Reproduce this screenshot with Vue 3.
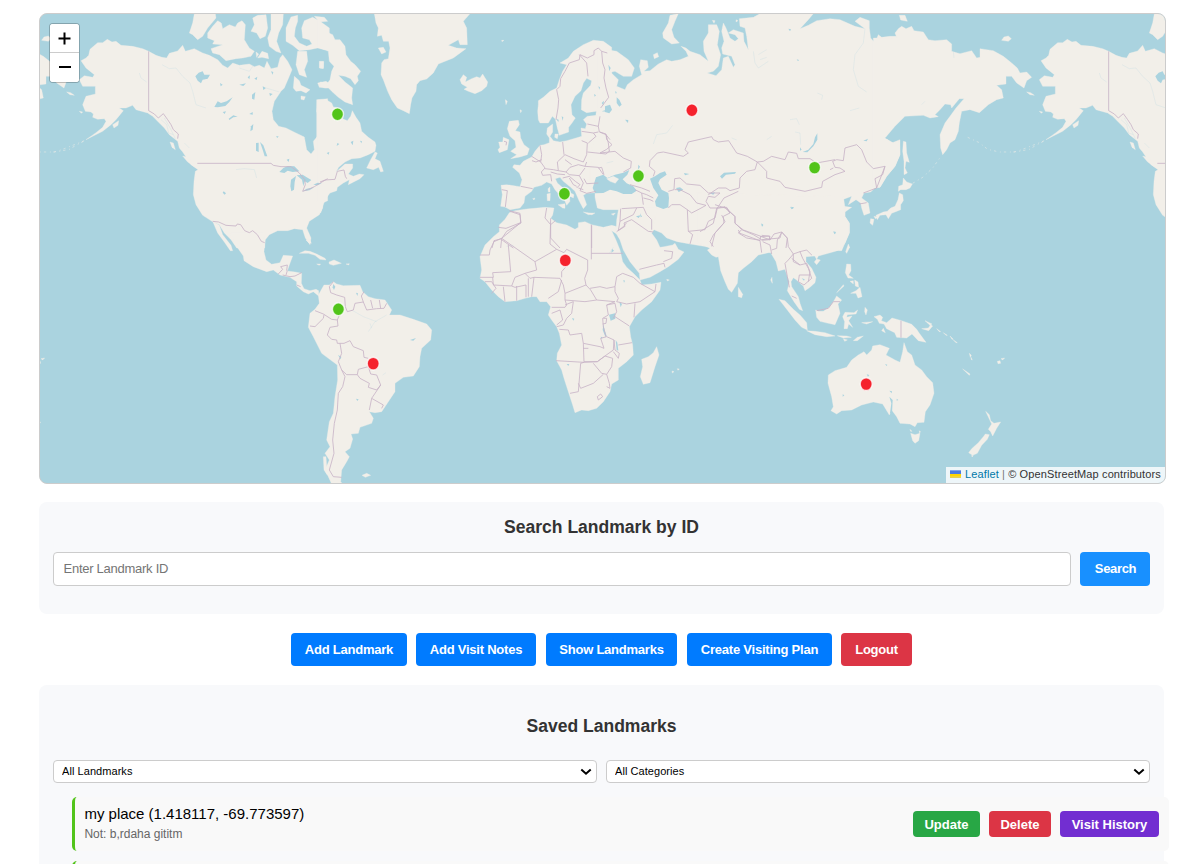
<script setup>
import { ref } from 'vue'

// Each map sheet has its own origin; coordinates are thirds of a pixel.
const sheets = [
  {
    x: 0, y: 0,
    land: [
      '135,158 150,150 158,142 162,124 185,104 200,104 214,94 228,102 240,100 255,112 290,115 320,122 338,130 360,142 378,148 392,150 400,136 425,129 440,112 448,130 475,122 500,135 520,142 545,155 560,172 575,180 590,165 610,172 640,168 655,176 670,172 685,180 693,160 705,182 725,178 732,150 740,140 755,160 768,185 760,205 745,240 735,250 715,280 708,310 712,335 728,355 750,360 780,375 805,387 812,425 825,438 835,425 832,400 850,378 852,345 842,310 845,275 875,272 875,578 860,585 860,600 850,620 820,640 812,660 825,690 822,710 808,690 800,665 775,662 755,668 725,668 700,680 688,695 686,720 602,720 585,695 565,675 550,650 528,640 500,622 480,590 472,560 474,520 478,490 486,485 465,470 452,450 440,432 430,420 425,400 400,380 385,360 370,345 350,325 335,315 300,305 290,292 270,300 250,300 262,308 240,335 225,350 200,370 170,385 150,395 180,374 200,358 210,340 205,332 185,334 170,328 172,318 165,312 148,310 140,290 150,265 178,258 178,235 140,235 130,215 145,203 170,208 175,200 150,180',
      '530,640 550,652 560,680 585,712 590,728 583,728 565,702 545,675',
      '475,17 538,17 540,30 515,60 500,85 485,95 470,80 460,75 470,45',
      '515,75 530,55 545,38 556,45 560,62 580,50 598,57 605,45 618,38 628,50 625,95 640,120 655,130 645,145 620,150 600,152 570,158 550,140 530,135 525,122 560,110 530,108 535,98 515,90',
      '650,30 665,22 690,20 695,60 688,85 672,92 662,75 645,70 655,50',
      '705,17 742,17 740,50 728,75 722,100 735,135 720,130 700,115 695,90 705,65',
      '678,130 695,136 698,152 678,148 665,150',
      '750,60 765,27 785,22 785,40 778,60 775,85 790,105 812,115 828,108 820,95 800,90 797,60 805,38 830,28 852,40 880,60 880,120 865,125 845,120 820,125 790,128 770,112 750,100',
      '835,25 865,28 875,40 850,42', '785,130 812,130 815,160 805,185 812,208 790,200 780,170',
      '775,205 790,218 795,232 822,245 810,255 795,248 780,250 772,240', '850,160 863,160 862,182 850,180', '795,264 808,266 804,276 795,274',
      '845,225 870,220 885,230 875,240 850,238', '402,402 412,405 418,425 408,418', '440,444 455,448 480,472 478,478 455,462',
      '230,350 248,338 246,352 234,360', '130,310 140,312 136,316', '660,132 668,138 662,148'
    ],
    water: [
      '478,205 488,194 500,190 505,200 522,200 515,212 500,215 495,226 485,218', '535,297 545,280 555,285 572,280 590,268 580,282 568,294 545,298',
      '730,492 742,480 755,474 775,475 790,490 770,492 755,488 745,495', '765,515 780,504 776,522 774,545 766,550 763,535',
      '782,502 800,500 812,508 826,516 815,525 806,520 802,535 798,515', '800,550 812,542 835,538 820,547', '832,530 845,524 857,526 845,532',
      '660,405 668,404 668,432 660,428', '672,402 682,412 694,445 686,445 680,425', '563,550 570,556 566,560 560,554', '578,332 592,322 605,326 592,328 580,336', '645,355 652,348 650,365 643,370',
      '648,260 658,252 655,275 648,272', '635,208 642,202 640,214', '610,230 630,226 622,234', '680,235 690,240 682,246', '752,455 760,452 758,462',
      '552,225 560,230 554,235', '705,190 712,192 710,200', '495,205 520,204 505,214', '560,312 570,310 566,318', '720,385 728,385 724,390', '640,318 650,312 650,320', '655,212 664,206 662,216', '700,255 710,258 702,264'
    ],
    borders: [
      '338,130 338,308 355,318 367,330 382,317 395,335 405,350 412,365 427,378 425,392', '484,466 705,466 712,472 735,476 765,476 790,495 806,515 808,530 800,550 815,545 835,536 848,528 858,522 875,512',
      '530,640 548,642 570,652 600,654 604,648 614,650 626,668 640,674 650,668 664,680 676,700 686,704'
    ],
    rivers: ['378,170 400,182 420,180 440,205 462,225 470,250 480,290 510,300', '310,195 315,210 332,222', '600,485 625,482 655,485 662,510', '375,335 392,350 398,375 412,380', '385,330 405,365 418,392', '445,405 460,420', '690,240 730,252', '610,180 640,190 650,175']
  },
  {
    x: 852, y: 0,
    land: [
      '-10,275 20,276 35,285 40,297 55,300 68,312 68,332 82,338 92,325 97,308 108,328 120,345 125,370 145,388 165,402 168,412 165,430 145,440 120,450 95,452 75,462 56,478 48,492 75,468 98,468 98,480 85,498 100,505 118,498 132,500 120,512 95,525 85,530 88,515 70,525 52,538 50,548 30,555 15,575 10,590 2,615 -5,600 -10,580',
      '140,480 152,455 165,432 172,435 165,452 180,460 190,490 182,492 176,478 160,485',
      '-5,35 10,52 20,72 38,80 45,95 60,95 75,115 78,140 92,160 105,170 122,190 112,205 115,218 105,230 92,212 75,205 55,202 75,222 98,240 95,270 98,290 75,282 55,268 35,250 18,232 30,215 35,190 42,175 28,160 25,130 -5,118',
      '0,165 10,162 10,180 0,180', '0,222 18,225 30,240 15,240 0,235',
      '163,17 450,17 430,40 440,60 442,110 420,110 415,95 385,112 410,120 438,122 400,150 355,168 340,195 320,213 300,218 290,230 288,250 276,270 272,290 268,317 250,308 232,300 215,275 203,250 190,215 183,200 185,165 192,155 205,152 210,120 206,100 190,100 185,82 172,85 175,60 168,45',
      '175,120 190,118 198,132 185,138', '420,215 430,200 440,208 436,222 455,212 470,206 480,210 488,198 494,208 503,222 500,235 485,248 465,257 445,250 432,244 442,238 425,228',
      '543,532 560,530 600,536 606,515 598,495 578,478 582,470 600,472 610,460 635,447 645,430 660,412 672,410 688,404 688,390 680,378 682,360 698,348 698,372 690,385 700,398 720,402 740,398 768,390 785,385 783,360 796,362 800,348 790,335 802,325 830,322 845,310 900,300 900,480 870,495 850,510 840,535 845,550 825,554 800,556 790,562 800,590 790,602 778,580 765,550 752,538 730,520 720,508 706,512 712,525 735,545 762,560 760,570 748,564 750,580 740,592 735,580 720,562 705,545 695,528 680,522 665,532 642,538 635,550 615,565 612,585 600,600 570,605 555,597 542,595 547,560',
      '714,590 735,587 735,601 728,600', '681,558 691,556 690,578 682,578', '684,542 690,537 690,552 685,552', '800,615 825,615 815,620', '638,572 645,570 642,576',
      '568,340 595,337 598,350 586,368 600,372 602,390 612,410 628,422 622,440 600,447 572,452 590,440 572,430 588,418 585,398 570,385 562,362', '550,388 567,395 562,425 538,434 534,425 540,418 536,402 548,402',
      '655,335 653,310 655,290 655,278 670,268 690,250 710,240 718,215 728,190 740,170 720,165 745,150 760,130 790,110 820,97 850,100 875,118 875,300 840,308 800,314 784,305 785,275 790,255 812,232 815,218 800,211 790,225 783,248 765,265 753,290 756,320 766,330 756,345 746,358 746,372 718,382 712,360 706,333 697,325 685,345 660,345',
      '705,378 715,378 712,392 704,388', '545,97 552,97 546,101', '556,275 562,280 558,290', '600,305 605,308 602,314'
    ],
    water: ['708,332 716,335 715,342', '725,325 730,328 728,338', '845,310 870,302 868,312', '52,405 58,408 50,414', '92,402 100,398 98,412', '120,398 126,400 124,406', '20,435 28,432 26,440', '835,235 840,238 838,245', '822,258 828,262 824,266'],
    borders: [
      '0,522 15,516 45,514 52,490 72,486 76,505 80,512', '708,335 714,300 716,275 710,245 720,235 722,212 735,190 748,165 778,155 780,140 802,150 822,140 822,128 835,120 845,130 848,165 855,185 852,210 858,240 866,268 842,300', '778,140 800,165 804,205', '845,130 862,135',
      '660,412 665,440 662,462 635,445', '662,462 675,480 664,492 668,502 692,500 695,520', '675,482 700,485 715,488 712,462 735,440 762,452 790,462 800,440 802,405 785,398', '728,402 732,440', '715,488 738,492 750,478 775,470 795,475 800,462', '735,455 755,470', '738,492 748,500 778,503 795,480', '728,510 748,505 766,520 780,530 770,540', '748,510 760,530 770,535', '795,475 835,478 850,500', '792,512 800,527 835,525', '778,503 790,525 780,548 800,556 828,550', '775,540 790,545', '692,492 712,498 735,500', '602,535 638,542', '545,545 562,548 556,597',
      '785,370 820,375 835,372', '802,348 835,355', '840,325 835,355 838,372 858,380 870,395', '820,375 828,385 805,405', '802,432 858,438 870,428', '858,380 865,405 868,430', '552,400 560,402 558,412', '636,458 648,462 665,455', '835,480 845,478 852,500',
      '570,610 600,620 603,645 560,670 545,692 542,720', '545,692 522,698 516,720', '680,600 675,630 692,650 706,638', '692,650 692,690 720,720', '815,652 815,720', '545,695 580,720'
    ],
    rivers: ['560,715 580,712']
  },
  {
    x: 1692, y: 0,
    land: [
      '-10,110 5,105 20,125 50,130 85,155 103,180 95,205 70,205 45,190 32,193 55,215 50,235 75,245 82,230 100,215 125,200 118,175 122,155 142,158 145,178 132,190 150,188 175,168 200,155 215,160 240,155 265,145 258,130 243,115 258,120 270,130 300,140 325,160 312,130 310,100 325,75 325,50 350,50 358,70 352,110 362,140 355,175 340,190 322,195 348,203 365,185 370,150 385,145 400,178 405,170 395,145 368,138 365,120 372,100 365,70 370,45 378,60 390,90 405,100 415,92 405,80 385,75 400,65 430,75 432,100 445,125 440,85 435,60 420,55 418,32 460,28 480,17 640,17 625,35 600,62 625,52 650,38 690,32 720,35 765,55 795,62 765,40 780,28 808,38 808,60 812,90 825,105 835,80 845,88 870,85 890,85 890,340 880,350 855,390 875,405 900,395 900,440 885,475 860,505 840,538 825,540 812,552 792,555 785,570 805,585 810,615 792,622 785,600 782,585 768,575 745,590 755,565 735,572 716,580 730,595 755,598 735,612 735,625 748,645 748,675 735,705 725,728 330,718 270,708 232,701 200,690 185,675 162,665 155,675 55,675 52,650 60,605 10,605 -8,600 -15,568 -15,555 -30,530 -30,480 -10,300',
      '235,17 225,40 215,65 222,88 238,105 215,108 190,90 188,75 205,45 210,22', '160,140 172,134 176,146 163,152', '337,37 345,38 342,46', '408,35 414,38 408,42', '34,618 46,615 40,622', '-50,612 -20,618 -35,620'
    ],
    water: [
      '-12,508 10,500 22,510 45,500 70,494 88,486 82,500 68,514 80,526 100,535 110,548 95,558 70,558 50,550 30,545 10,555 -15,556 -22,540',
      '150,512 165,505 180,495 195,490 200,500 180,514 175,525 185,545 205,555 207,570 205,598 190,603 168,595 165,580 175,562 160,540',
      '608,432 625,425 640,408 645,388 652,376 652,395 640,415 622,433', '15,295 30,290 36,305 28,316 15,312', '50,268 58,275 65,290 58,296 50,285', '75,335 85,336 84,345', '360,505 372,494 408,492 405,497 378,500 366,512',
      '228,540 240,538 250,545 236,552', '252,495 268,498 255,502', '330,556 345,553 340,560', '570,597 580,600 575,604', '484,646 490,650 486,654', '700,670 708,672 704,678', '790,398 804,392 800,400', '855,390 870,380 870,395',
      '565,62 573,64 570,70', '590,154 597,156 594,160', '600,418 605,425 600,428', '115,470 120,476 114,485', '45,250 50,252 48,258', '5,285 12,278 10,292', '108,625 122,622 116,630', '25,170 32,180 28,190'
    ],
    borders: [
      '0,372 18,378 20,395 36,410 20,424 0,435', '0,435 45,430 70,450 94,460 92,480 70,492',
      '160,505 165,490 148,475 150,458 172,435 190,432 250,445 265,435 255,425 265,402 335,386 340,395 355,402 386,398 410,435 442,445 472,462 500,490 500,510 540,520 555,538 615,550 665,538 668,520 705,500 735,490 720,480 705,478 698,460 710,455 730,458 735,420 770,410 785,425 800,462 820,482 855,475 830,540 790,555',
      '472,462 490,460 515,445 555,455 565,432 590,436 595,452 630,452 650,465 705,455', '855,475 848,500 825,512 830,540',
      '472,462 465,485 440,490 420,510 418,540 390,548 378,540 355,540 325,560', '222,545 224,512 240,510 260,528 300,532 325,555 360,555 345,568 325,565 318,580 330,600 352,600 372,570 415,550', '224,545 240,545 270,560 290,585 318,592 300,602 275,615 262,605 240,590 215,590 205,600', '222,545 205,550',
      '262,605 265,670 315,665 325,640 345,630 352,600 380,598 390,615 370,625 372,645 345,675 335,715', '265,670 278,680 270,708', '345,590 375,600 405,625 405,645 425,665 460,680 485,695 540,690 545,672 562,690 558,720', '425,665 415,675 440,690 480,697', '485,682 510,685 508,695 485,697', '390,615 380,600',
      '65,602 130,598 140,620 155,635 155,665', '62,602 60,640 100,620 110,600', '60,640 55,668 75,655 72,645 95,635 145,670 160,672', '90,530 125,540 150,550', '105,545 125,555 130,590', '125,555 140,560 160,570', '130,570 150,575 160,580', '700,480 690,485'
    ],
    rivers: ['795,62 790,105 765,140 760,185 775,235 800,252', '460,130 465,165 475,180 505,160', '480,155 500,148', '475,140 500,125', '570,335 590,332 598,350', '585,372 600,375 602,410', '160,408 170,380 200,375 218,352', '652,255 668,262 665,275', '500,395 515,385', '750,308 778,300', '395,390 410,396', '20,465 40,460']
  },
  {
    x: 2532, y: 0,
    land: [
      '30,90 50,88 45,75 55,62 65,55 78,62 95,55 102,68 130,72 145,95 165,98 200,95 215,108 215,130 240,137 275,128 290,150 300,148 300,122 340,128 370,145 395,165 412,180 420,195 440,192 455,208 440,218 432,240 410,225 395,205 378,205 378,228 350,232 365,245 370,270 350,275 325,290 298,314 270,305 245,310 238,345 235,370 225,395 210,405 200,425 188,440 182,420 180,380 195,345 210,325 228,300 252,272 238,272 215,300 212,290 195,288 180,305 165,320 175,326 150,330 130,322 75,325 45,355 15,390 40,405 58,398 60,440 45,475 20,505 0,538 -20,538 -20,90',
      '365,97 372,87 385,84 394,92 385,100', '58,22 75,22 82,40 62,36', '440,252 452,254 463,262 450,260', '70,400 78,402 80,435 88,463 78,460 75,480 82,495 72,500 72,460 68,430', '70,510 80,522 97,528 90,540 78,545 62,545 55,550 56,535 68,530',
      '58,555 68,560 70,578 62,590 62,605 45,612 35,616 25,632 18,620 0,622 -8,635 -12,622 10,612 22,610 32,600 45,595 54,575', '-18,625 -5,628 -14,632', '-28,632 -18,634 -22,652 -30,645'
    ],
    water: [], borders: [],
    rivers: ['125,290 135,280', '220,130 222,150']
  },
  {
    x: 492, y: 696,
    land: [
      '92,-20 100,5 130,48 132,62 160,80 200,95 220,90 240,105 270,112 290,125 290,138 310,155 325,162 340,155 356,168 356,152 348,148 330,152 312,146 304,130 305,100 285,96 262,93 268,75 278,48 250,46 240,68 215,73 198,60 192,35 194,10 190,-20',
      '355,165 372,135 388,135 400,125 410,132 430,137 480,136 488,155 505,170 525,176 555,180 575,210 568,225 600,225 640,238 680,252 695,270 692,300 665,325 660,350 658,380 640,408 610,412 585,430 585,455 565,485 545,515 525,518 508,515 520,535 515,550 480,562 475,580 453,582 458,597 450,625 435,635 448,650 440,665 425,690 422,725 428,732 395,732 385,710 375,690 388,660 375,640 390,620 380,600 388,545 400,520 405,470 413,420 412,375 385,355 365,340 340,290 325,262 330,220 345,208 358,190',
      '298,40 315,32 330,34 350,42 375,55 378,60 360,58 345,46 325,40', '387,66 402,60 424,70 400,76 388,72', '350,72 362,72 358,76', '438,72 448,71 446,75', '486,706 500,700 512,706 496,712', '318,0 330,0 334,10 326,8', '370,650 378,650 382,705 372,690'
    ],
    water: ['400,132 406,140 402,150 398,142', '414,345 424,350 422,358', '468,476 476,478 472,483', '468,158 474,160 472,168', '630,300 648,294 640,302'],
    borders: [
      '235,102 248,88 242,80 262,75 260,92', '248,105 270,110 285,108 305,98', '262,92 258,105', '290,135 302,140',
      '400,125 388,140 392,158 410,165 434,172 436,200 442,215 460,210 465,190 490,186 484,168 492,155', '345,212 370,222 395,238 412,240 418,225 418,205', '330,258 345,260 370,235 372,224', '412,240 414,258 390,262 382,285 395,298 410,300 412,310 432,310 450,302 460,320 490,332 492,352 505,355', '490,186 500,210 530,206 552,205 560,190', '512,180 518,205', '538,180 542,205', '420,310 425,340 415,365 425,390 435,410 428,440 415,460 412,510 403,550 398,600 402,640 388,690 400,710 425,712', '425,390 440,404 472,404 475,388 505,380 512,402 530,405 542,435 530,450 505,442 508,430 480,415 472,404', '542,435 515,475 508,510', '515,475 550,495 545,505'
    ],
    rivers: ['505,275 525,245 560,225', '455,210 490,230 530,245', '548,405 558,398', '510,250 515,265']
  },
  {
    x: 1272, y: 546,
    land: [
      '148,68 165,62 200,57 255,52 282,54 278,75 272,85 290,98 320,105 345,118 355,112 355,98 375,95 395,104 430,112 455,106 472,110 480,120 470,132 455,122 468,150 480,180 488,215 500,232 520,250 540,270 545,285 575,282 603,277 600,300 575,335 545,360 525,380 508,410 512,440 518,465 520,495 500,515 475,535 475,570 455,582 450,605 430,635 410,655 385,662 365,660 345,668 338,645 325,605 312,565 305,540 290,512 292,490 305,465 298,430 290,410 275,390 265,375 272,350 260,335 240,335 230,320 215,320 195,325 170,332 135,335 115,320 95,300 75,275 60,265 65,240 60,200 75,165 100,140 118,125 118,105 135,88',
      '470,90 476,55 590,55 578,122 575,130 590,150 600,172 612,170 638,165 645,160 655,178 672,186 655,208 625,230 600,245 570,262 540,270 538,250 510,215 490,180 480,150 468,130',
      '590,470 597,495 585,530 570,578 550,583 541,560 548,530 545,508 565,500 580,488', '620,268 628,270 622,273', '636,543 642,545 637,549', '652,536 658,537 654,541'
    ],
    water: ['447,374 465,370 466,386 452,392', '430,402 434,420 440,438 436,440 428,420', '467,450 472,458 475,482 470,480', '456,176 462,182 454,188', '320,522 328,522 325,528', '490,270 495,272 492,278', '478,335 486,342 482,352', '540,70 546,80 542,82', '336,384 343,386 340,392', '422,440 428,442 424,446'],
    borders: [
      '115,112 138,115 182,98 180,70 148,62', '125,145 182,98', '60,195 88,195 90,180 102,155 125,145 225,215 290,178 312,188 320,178 383,210', '145,165 152,245 98,248 100,262 60,262', '272,85 270,162 290,178', '394,104 394,208', '394,190 488,190', '383,210 383,240 374,265 378,285 392,300 410,330', '225,215 230,240 195,250 165,262 155,288 100,285 98,262', '195,250 210,265 222,262 300,265 310,285 315,310 378,285', '222,262 215,320', '205,265 205,320', '170,288 170,332', '155,288 165,292 198,285 198,322', '130,290 135,335', '75,275 95,275 108,295 95,310', '318,230 305,245 305,262', '315,310 315,330 375,335 410,330 465,335 440,345', '305,270 295,305 265,325', '275,352 315,352 320,345 315,330', '315,345 340,335 335,370 320,385 310,405 290,410', '275,370 300,360 308,390 290,405', '390,295 420,290 440,295 465,290 470,260 488,250', '465,290 465,305 475,325 470,335 500,342 540,335 585,305 588,282', '488,250 520,262 540,280 585,305', '525,340 522,382', '440,345 445,375 428,385 430,410 438,440', '465,380 508,408', '440,345 465,340 470,365 460,385', '298,418 325,420 330,435 365,430 370,460 420,470 432,475 422,445 440,440 462,450 460,480 435,498 412,515 372,515 370,460', '370,475 385,475', '288,512 372,517 412,515 435,498 458,505 455,530 440,553 425,550 400,520', '372,517 362,520 355,605 330,610', '355,580 362,595 400,580 430,553', '440,553 448,580 450,595 440,590', '460,485 475,505 478,490 465,480 462,450', '475,465 516,458', '412,620 422,612 428,620 415,630 412,620', '538,238 590,225 612,220 615,232', '610,215 635,205 638,185 612,182', '470,125 490,110 500,98', '430,385 440,385 438,400 428,402'
    ],
    rivers: ['448,190 460,172']
  },
  {
    x: 1992, y: 576,
    land: [
      '-10,-20 430,-10 435,22 435,50 448,70 448,98 435,130 412,152 385,160 355,168 350,178 344,168 318,170 318,185 335,205 348,232 345,248 330,262 315,272 310,258 300,250 290,240 280,233 273,245 275,260 295,290 300,310 308,332 298,328 282,305 262,272 268,245 255,208 235,213 228,185 212,158 205,158 175,165 155,185 130,205 115,218 112,250 95,277 85,268 75,245 62,212 55,170 48,172 35,165 22,150 30,145 10,135 -10,128',
      '115,262 128,283 125,293 115,290', '237,298 255,302 280,328 300,345 320,368 322,390 305,382 285,360 262,330', '320,392 345,394 375,398 405,408 380,410 345,404', '412,407 440,408 454,412 430,414', '460,422 472,412 490,408 472,422', '430,416 442,420 434,424',
      '347,330 355,334 370,334 388,322 402,302 410,288 425,300 414,312 420,340 405,374 385,370 360,364 350,352', '428,350 435,337 462,338 473,330 468,342 442,344 440,352 456,348 446,362 458,382 446,372 442,386 432,386 434,365',
      '440,192 452,193 453,212 446,225 460,235 444,234 436,218', '452,280 468,272 480,262 486,290 474,294 468,280', '450,244 460,242 460,252', '464,240 474,246 476,262 466,258', '410,278 430,254 432,258', '495,322 502,330 498,345 494,335', '485,368 518,365 500,372',
      '522,350 540,345 548,352 544,362 560,368 576,354 605,362 635,373 650,388 658,400 678,427 655,422 636,402 620,414 590,412 584,398 560,386 552,372 538,370 532,358', '665,386 685,384 692,374 698,378 686,392', '437,155 445,132 449,142 440,160', '343,186 350,177 361,180 350,194', '212,240 216,232 217,250',
      '385,525 405,512 440,502 455,480 475,465 492,455 500,465 515,450 518,438 540,434 568,445 558,465 585,480 600,487 608,455 612,428 622,455 635,465 645,495 665,510 680,530 698,548 702,580 690,615 676,635 672,667 652,668 645,680 630,672 600,670 590,650 575,630 568,645 548,612 520,606 485,615 455,630 425,632 410,642 393,632 400,620 395,590 384,550', '632,700 645,704 660,700 656,722 645,730 638,722', '567,585 578,590 572,596', '550,385 556,398 545,392'
    ],
    water: ['272,20 282,22 278,27', '184,72 190,76 186,80', '400,95 408,98 404,103', '568,590 578,600 576,640 570,640 574,610', '305,235 314,238 312,242', '500,523 508,525 504,530', '555,492 562,494 560,498', '428,583 433,586 428,590', '568,572 576,574 575,580', '590,596 595,600 590,602'],
    borders: [
      '0,95 40,70 50,25 75,20 105,50 105,70 130,90 180,108 210,120 222,102 245,96 262,115 265,140 280,162 300,155 320,150 335,165', '65,45 75,65 40,105 30,125 40,140', '115,90 120,100 180,122 182,108', '180,122 185,158', '182,110 208,108 210,120', '188,125 210,135 215,162', '245,98 232,120 230,145 215,150', '280,162 265,180 255,190 262,230 268,262', '275,175 300,195 320,190 330,215 325,245', '280,162 280,185 300,195', '300,155 308,175 325,205 335,235 312,255 295,245 298,225 330,225', '275,288 290,295', '350,332 385,325 400,305 420,305', '603,362 603,413', '478,12 500,8'
    ],
    rivers: []
  },
  {
    x: 2592, y: 876,
    land: ['257,334 268,344 272,362 282,370 302,366 290,385 278,408 272,395 265,388 275,372', '256,402 268,404 262,418 245,436 232,460 218,466 206,458 215,446 235,428 250,410', '188,207 210,222 208,226', '292,184 300,182 302,190 294,191', '303,176 314,174 308,180', '110,86 122,95 118,95', '130,98 142,106 138,106', '150,108 160,118 156,118', '160,120 172,128 168,128', '208,160 214,166 211,172', '213,172 217,180 213,178', '30,388 36,394 32,394', '58,392 62,396 58,398', '215,466 220,467 216,471', '75,62 96,72 90,76'],
    water: [], borders: [], rivers: []
  }
]

const chains = [
  '52,432 70,430 100,424 120,412 150,396', '2795,388 2830,404 2855,424 2890,432 2935,432 2960,424 3000,408 3030,396', '2630,526 2660,508 2690,480 2715,445'
]

const pins = [
  { x: 337.5, y: 114.3, c: 'green' }, { x: 564.4, y: 193.8, c: 'green' }, { x: 638.4, y: 176, c: 'green' },
  { x: 814.6, y: 167.6, c: 'green' }, { x: 338.4, y: 309.2, c: 'green' }, { x: 691.9, y: 110.3, c: 'red' },
  { x: 565.3, y: 260.4, c: 'red' }, { x: 373.2, y: 363.6, c: 'red' }, { x: 866.2, y: 384.1, c: 'red' }
]

const landmarkId = ref('')
const actions = [
  { label: 'Add Landmark', w: 'w1' }, { label: 'Add Visit Notes', w: 'w2' }, { label: 'Show Landmarks', w: 'w3' },
  { label: 'Create Visiting Plan', w: 'w4' }, { label: 'Logout', w: 'w5 danger' }
]
const filters = ['All Landmarks', 'All Categories']
const landmarks = [
  { name: 'my place (1.418117, -69.773597)', note: 'Not: b,rdaha gititm' }
]
</script>

<template>
  <main class="page">
    <section class="map">
      <svg class="canvas" viewBox="40 14 1125 469" width="1125" height="469">
        <defs>
          <g id="world" transform="translate(36 8) scale(0.333333)">
            <g v-for="(s, i) in sheets" :key="'l' + i" class="land" :transform="`translate(${s.x} ${s.y})`">
              <polygon v-for="(p, j) in s.land" :key="j" :points="p" />
            </g>
            <g v-for="(s, i) in sheets" :key="'w' + i" :transform="`translate(${s.x} ${s.y})`">
              <polygon v-for="(p, j) in s.water" :key="j" class="water" :points="p" />
              <polyline v-for="(p, j) in s.rivers" :key="'r' + j" class="river" :points="p" />
            </g>
            <polygon class="land" points="1712,512 1732,505 1748,513 1738,526 1722,520" />
            <g v-for="(s, i) in sheets" :key="'b' + i" :transform="`translate(${s.x} ${s.y})`">
              <polyline v-for="(p, j) in s.borders" :key="j" class="border" :points="p" />
            </g>
            <polyline v-for="(p, i) in chains" :key="'c' + i" class="chain" :points="p" />
          </g>
        </defs>
        <use href="#world" />
        <use href="#world" x="960" />
        <use href="#world" x="-960" />
        <ellipse v-for="(p, i) in pins" :key="i" class="pin" :class="p.c" :cx="p.x" :cy="p.y" rx="6" ry="6.4" />
      </svg>
      <div class="zoom">
        <button type="button" aria-label="Zoom in"><svg width="13" height="13" viewBox="0 0 13 13"><path d="M6.500 .5v12M.5 6.500h12" /></svg></button>
        <button type="button" aria-label="Zoom out"><svg width="13" height="13" viewBox="0 0 13 13"><path d="M1 6h12" /></svg></button>
      </div>
      <div class="credit">
        <svg width="11" height="8" viewBox="0 0 12 8"><path fill="#4c7be1" d="M0 0h12v4H0z" /><path fill="#ffd500" d="M0 4h12v3H0z" /><path fill="#e0bc00" d="M0 7h12v1H0z" /></svg>
        <span><a>Leaflet</a> <i>|</i> © OpenStreetMap contributors</span>
      </div>
    </section>

    <section class="card search">
      <h3>Search Landmark by ID</h3>
      <div class="row">
        <input v-model="landmarkId" type="text" placeholder="Enter Landmark ID" />
        <button class="btn find" type="button">Search</button>
      </div>
    </section>

    <nav class="actions">
      <button v-for="a in actions" :key="a.label" class="btn" :class="a.w" type="button">{{ a.label }}</button>
    </nav>

    <section class="card saved">
      <h3>Saved Landmarks</h3>
      <div class="filters">
        <label v-for="f in filters" :key="f">
          <select><option>{{ f }}</option></select>
          <svg width="12" height="8" viewBox="0 0 12 8"><path d="M1.300 1.500 6 5.700 10.700 1.500" /></svg>
        </label>
      </div>
      <ul>
        <li v-for="l in landmarks" :key="l.name">
          <div class="info"><p>{{ l.name }}</p><small>{{ l.note }}</small></div>
          <div class="tools">
            <button class="btn update" type="button">Update</button>
            <button class="btn danger delete" type="button">Delete</button>
            <button class="btn history" type="button">Visit History</button>
          </div>
        </li>
        <li></li>
      </ul>
    </section>
  </main>
</template>

<style>
html, body { background: #fff; overflow: hidden; }
</style>

<style scoped>
* { box-sizing: border-box; }
.page { height: 864px; padding: 13px 33px 0 39px; overflow: hidden; font-family: "Liberation Sans", Arial, sans-serif; color: #000; }
.map { position: relative; width: 1127px; height: 471px; border: 1px solid #ccc; border-radius: 8px; overflow: hidden; background: #aad3df; }
.canvas { display: block; }
.land { fill: #f2efe9; stroke: #f2efe9; stroke-width: 1; stroke-linejoin: round; }
.water { fill: #aad3df; }
.river { fill: none; stroke: #aad3df; stroke-width: 1.5; opacity: .4; }
.border { fill: none; stroke: #c9b5c7; stroke-width: 3; stroke-linejoin: round; opacity: .85; }
.chain { fill: none; stroke: #f2efe9; stroke-width: 2.5; stroke-dasharray: 7 11 3 9; opacity: .6; }
.pin { stroke: #fff; stroke-opacity: .75; stroke-width: 1.4; }
.pin.green { fill: #52c41a; }
.pin.red { fill: #f5222d; }
.zoom { position: absolute; left: 9px; top: 9px; width: 31px; height: 60px; border: 1px solid rgba(0,0,0,.22); border-radius: 4px; overflow: hidden; background: #fff; background-clip: padding-box; }
.zoom button { display: flex; align-items: center; justify-content: center; width: 29px; height: 29px; padding: 0; border: 0; background: #fff; }
.zoom button:first-child { border-bottom: 1px solid #ccc; }
.zoom path { stroke: #000; stroke-width: 2; fill: none; }
.credit { position: absolute; right: 0; bottom: 0; display: flex; align-items: center; gap: 4px; width: 219px; height: 16px; padding: 0 0 2px 4px; background: rgba(255,255,255,.8); font-size: 11px; letter-spacing: .12px; color: #333; white-space: nowrap; }
.credit a { color: #0078a8; }
.credit i { font-style: normal; color: #777; }
.card { width: 1125px; background: #f8f9fb; border-radius: 8px; }
h3 { margin: 0; text-align: center; font-size: 17.55px; line-height: 22px; color: #333; }
.search { height: 112px; margin-top: 18px; padding: 14px 14px 0; }
.row { display: flex; gap: 9px; margin-top: 14px; }
input { flex: 1; height: 34px; padding: 0 9.5px 1px; border: 1px solid #ccc; border-radius: 4px; background: #fff; font: 13px "Liberation Sans", Arial, sans-serif; letter-spacing: -.26px; outline: none; }
input::placeholder { color: #757575; opacity: 1; }
.btn { padding: 0; border: 0; border-radius: 4px; background: #007bff; color: #fff; font: bold 13px "Liberation Sans", Arial, sans-serif; letter-spacing: -.23px; white-space: nowrap; }
.find { width: 70px; padding: 0 0 2px 1px; background: #1890ff; letter-spacing: -.35px; }
.actions { display: flex; margin: 19px 0 0 252px; }
.actions .btn { height: 33px; }
.w1 { width: 116px; margin-right: 9px; }
.w2 { width: 120px; margin-right: 10px; }
.w3 { width: 131px; margin-right: 10px; }
.w4 { width: 145px; margin-right: 9px; }
.w5 { width: 71px; }
.btn.danger { background: #dc3545; }
.saved { height: 200px; margin-top: 19px; padding: 30px 14px 0; }
.filters { display: flex; gap: 9px; margin-top: 23px; }
.filters label { position: relative; flex: 1; height: 23px; }
select { display: block; width: 100%; height: 23px; padding: 0 8px 2px; border: 1px solid #ccc; border-radius: 4px; background: #fff; color: #000; font: 11px "Liberation Sans", Arial, sans-serif; letter-spacing: .06px; appearance: none; }
label svg { position: absolute; right: 5px; top: 8px; }
label path { fill: none; stroke: #000; stroke-width: 2; }
ul { width: 1097px; margin: 14px 0 0 19px; padding: 0; list-style: none; }
li { display: flex; justify-content: space-between; align-items: center; height: 54px; margin-bottom: 10px; padding: 0 10px 0 9.4px; border-left: 3px solid #52c41a; border-radius: 5px; background: #f9f9f9; }
.info p { margin: 0; font-size: 15px; line-height: 20px; }
.info small { display: block; font-size: 12px; line-height: 20px; color: #666; }
.tools { display: flex; gap: 9px; }
.tools .btn { height: 26px; letter-spacing: 0; }
.tools .update { width: 67px; background: #28a745; }
.tools .delete { width: 62px; }
.tools .history { width: 99px; background: #722ed1; }
</style>
